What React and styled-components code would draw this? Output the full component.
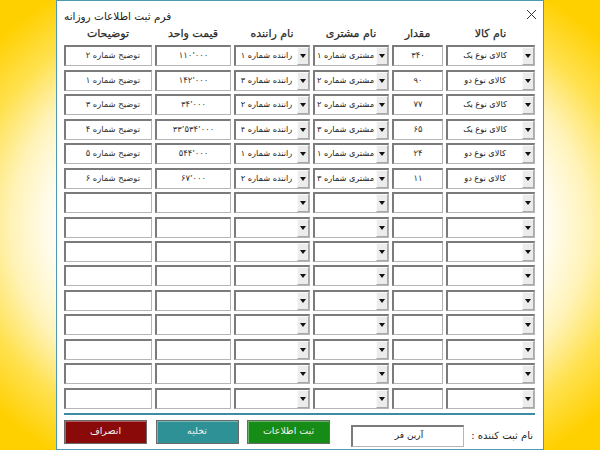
import React from 'react';
import styled, { createGlobalStyle } from 'styled-components';

const GlobalStyle = createGlobalStyle`
  html, body {
    margin: 0;
    padding: 0;
  }
  body {
    font-family: "DejaVu Sans", "Noto Sans", sans-serif;
  }
`;

const rows = [
  ['کالای نوع یک', '۳۴۰', 'مشتری شماره ۱', 'راننده شماره ۱', '۱۱۰٬۰۰۰', 'توضیح شماره ۲'],
  ['کالای نوع دو', '۹۰', 'مشتری شماره ۲', 'راننده شماره ۳', '۱۴۲٬۰۰۰', 'توضیح شماره ۱'],
  ['کالای نوع یک', '۷۷', 'مشتری شماره ۲', 'راننده شماره ۲', '۳۴٬۰۰۰', 'توضیح شماره ۳'],
  ['کالای نوع یک', '۶۵', 'مشتری شماره ۳', 'راننده شماره ۴', '۳۳٬۵۳۴٬۰۰۰', 'توضیح شماره ۴'],
  ['کالای نوع دو', '۲۴', 'مشتری شماره ۱', 'راننده شماره ۱', '۵۴۴٬۰۰۰', 'توضیح شماره ۵'],
  ['کالای نوع دو', '۱۱', 'مشتری شماره ۳', 'راننده شماره ۲', '۶۷٬۰۰۰', 'توضیح شماره ۶'],
];

// pad to 15 rows with empty ones
while (rows.length < 15) rows.push(['', '', '', '', '', '']);

const headers = ['نام کالا', 'مقدار', 'نام مشتری', 'نام راننده', 'قیمت واحد', 'توضیحات'];

function App() {
  return (
    <Page>
      <GlobalStyle />
      <Window>
        <TitleBar>
          <Title>فرم ثبت اطلاعات روزانه</Title>
          <Close>
            <svg width="11" height="11" viewBox="0 0 11 11">
              <path d="M1 1 L10 10 M10 1 L1 10" stroke="#333" strokeWidth="1" fill="none" />
            </svg>
          </Close>
        </TitleBar>

        <Grid>
          {headers.map((h) => (
            <Header key={h}>{h}</Header>
          ))}
          {rows.map((r, i) => (
            <React.Fragment key={i}>
              <Combo>
                <DropBtn>
                  <Arrow />
                </DropBtn>
                <ComboText>{r[0]}</ComboText>
              </Combo>
              <Field $align="center">{r[1]}</Field>
              <Combo>
                <DropBtn>
                  <Arrow />
                </DropBtn>
                <ComboText>{r[2]}</ComboText>
              </Combo>
              <Combo>
                <DropBtn>
                  <Arrow />
                </DropBtn>
                <ComboText>{r[3]}</ComboText>
              </Combo>
              <Field $align="center">{r[4]}</Field>
              <Field $align="right">{r[5]}</Field>
            </React.Fragment>
          ))}
        </Grid>

        <Separator />

        <Footer>
          <Buttons>
            <ActionButton $bg="#8a0a0a">انصراف</ActionButton>
            <ActionButton $bg="#2e9196">تخلیه</ActionButton>
            <ActionButton $bg="#168b16">ثبت اطلاعات</ActionButton>
          </Buttons>
          <UserBox>
            <UserInput>آرین فر</UserInput>
            <UserLabel>نام ثبت کننده :</UserLabel>
          </UserBox>
        </Footer>
      </Window>
    </Page>
  );
}

const Page = styled.div`
  width: 600px;
  height: 450px;
  display: flex;
  justify-content: center;
  overflow: hidden;
  background: radial-gradient(
    ellipse farthest-corner at 50% 50%,
    #ffffff 0%,
    #ffffff 56%,
    #fff3b8 68%,
    #ffe14f 79%,
    #ffd000 92%
  );
`;

const Window = styled.div`
  width: 488px;
  height: 450px;
  box-sizing: border-box;
  background: #ffffff;
  border: 1px solid #4d9ab2;
  padding: 0 8px 0 7px;
  display: flex;
  flex-direction: column;
`;

const TitleBar = styled.div`
  height: 28px;
  display: flex;
  align-items: center;
  justify-content: space-between;
  padding-top: 1px;
`;

const Title = styled.div`
  font-size: 10.5px;
  color: #222;
  direction: rtl;
`;

const Close = styled.div`
  width: 14px;
  height: 14px;
  display: flex;
  align-items: center;
  justify-content: center;
  margin-right: -3px;
  margin-top: -4px;
`;

const Grid = styled.div`
  direction: rtl;
  display: grid;
  grid-template-columns: 89px 51px 76px 76px 76px 88px;
  grid-auto-rows: 21px;
  grid-template-rows: 12px;
  column-gap: 3px;
  row-gap: 3.45px;
`;

const Header = styled.div`
  font-size: 11px;
  color: #2a2a2a;
  text-align: center;
  line-height: 12px;
  margin-top: -2px;
  -webkit-text-stroke: 0.25px #2a2a2a;
`;

const boxBorder = `
  box-sizing: border-box;
  border-top: 2px solid #7b7b7b;
  border-left: 2px solid #7b7b7b;
  border-right: 1px solid #b5b5b5;
  border-bottom: 1px solid #b5b5b5;
  background: #fff;
`;

const Field = styled.div`
  ${boxBorder}
  font-size: 8.4px;
  color: #333;
  display: flex;
  align-items: center;
  justify-content: ${(p) => (p.$align === 'center' ? 'center' : 'flex-start')};
  padding: 0 11px 2px;
  white-space: nowrap;
`;

const Combo = styled.div`
  ${boxBorder}
  display: flex;
  align-items: stretch;
`;

const ComboText = styled.div`
  flex: 1;
  font-size: 8.2px;
  color: #222;
  display: flex;
  align-items: center;
  justify-content: center;
  padding: 0 0 2px;
  white-space: nowrap;
  overflow: hidden;
`;

const DropBtn = styled.div`
  width: 12px;
  box-sizing: border-box;
  background: #ececec;
  border-left: 1px solid #fafafa;
  border-top: 1px solid #fafafa;
  border-right: 1px solid #a8a8a8;
  border-bottom: 1px solid #a8a8a8;
  display: flex;
  align-items: center;
  justify-content: center;
`;

const Arrow = styled.span`
  width: 0;
  height: 0;
  border-left: 3.5px solid transparent;
  border-right: 3.5px solid transparent;
  border-top: 4px solid #111;
`;

const Separator = styled.div`
  height: 2px;
  background: #3c8da3;
  margin-top: 4px;
`;

const Footer = styled.div`
  display: flex;
  align-items: flex-start;
  justify-content: space-between;
  margin-top: 5px;
`;

const Buttons = styled.div`
  display: flex;
  gap: 8.5px;
`;

const ActionButton = styled.div`
  width: 83px;
  height: 24px;
  box-sizing: border-box;
  background: ${(p) => p.$bg};
  border: 1px solid #6a6a6a;
  box-shadow: inset 1px 1px 0 rgba(255, 255, 255, 0.35);
  color: #f2f2f2;
  font-size: 9.5px;
  direction: rtl;
  display: flex;
  align-items: center;
  justify-content: center;
  padding-bottom: 2px;
`;

const UserBox = styled.div`
  display: flex;
  align-items: center;
  gap: 7px;
  margin-top: 5px;
`;

const UserInput = styled.div`
  ${boxBorder}
  width: 113px;
  height: 22px;
  font-size: 9px;
  color: #222;
  direction: rtl;
  display: flex;
  align-items: center;
  padding-right: 40px;
  padding-bottom: 2px;
`;

const UserLabel = styled.div`
  font-size: 10px;
  color: #222;
  direction: rtl;
  margin-right: 2px;
`;

export default App;
